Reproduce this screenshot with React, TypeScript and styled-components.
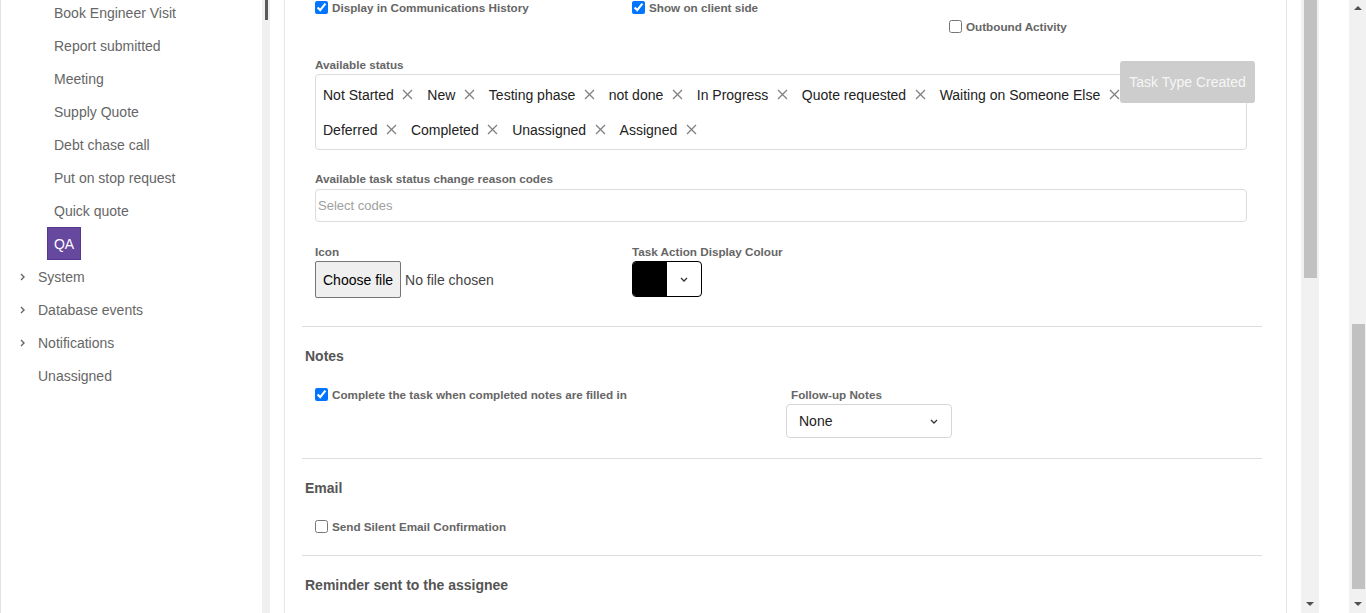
import React from 'react';
import styled, { createGlobalStyle } from 'styled-components';

const GlobalStyle = createGlobalStyle`
  html, body {
    margin: 0;
    padding: 0;
    overflow: hidden;
    background: #fff;
  }
  body {
    font-family: "Liberation Sans", Arial, sans-serif;
  }
  * { box-sizing: border-box; }
`;

const Page = styled.div`
  display: flex;
  width: 1366px;
  height: 613px;
  overflow: hidden;
`;

const Sidebar = styled.nav`
  width: 262px;
  flex-shrink: 0;
  border-left: 1px solid #e3e3e3;
  display: flex;
  flex-direction: column;
  margin-top: -4px;
`;

const NavItem = styled.div<{ $indent: number }>`
  height: 33px;
  display: flex;
  align-items: center;
  padding-left: ${p => p.$indent}px;
  font-size: 14px;
  color: #666;
`;

const Chevron = styled.span`
  width: 18px;
  display: flex;
  align-items: center;
`;

const Badge = styled.div`
  width: 34px;
  height: 33px;
  background: #67489f;
  border: 1px solid #553791;
  color: #fff;
  font-size: 14px;
  display: flex;
  align-items: center;
  justify-content: center;
`;

const SideTrack = styled.div`
  width: 8px;
  flex-shrink: 0;
  background: #f0f0f0;
`;

const SideThumb = styled.div`
  width: 3px;
  height: 20px;
  margin-left: 3px;
  background: #5a5a5a;
`;

const Main = styled.main`
  flex: 1;
  display: flex;
  padding-left: 14px;
`;

const Card = styled.section`
  position: relative;
  width: 1003px;
  flex-shrink: 0;
  border-left: 1px solid #e6e6e6;
  border-right: 1px solid #e6e6e6;
  padding: 0 24px 0 17px;
`;

const Fields = styled.div`
  padding: 0 15px 0 13px;
`;

const TopRow = styled.div`
  display: grid;
  grid-template-columns: 317px 317px 1fr;
  align-items: start;
  margin-top: -1px;
`;

const Check = styled.label<{ $offset?: number }>`
  display: flex;
  align-items: center;
  height: 16px;
  margin-top: ${p => p.$offset || 0}px;
  font-size: 11.7px;
  font-weight: bold;
  color: #666;

  input {
    width: 13px;
    height: 13px;
    margin: 0 4px 0 0;
  }
`;

const FieldLabel = styled.div<{ $top: number; $bottom?: number }>`
  font-size: 11.7px;
  line-height: 14px;
  font-weight: bold;
  color: #666;
  margin-top: ${p => p.$top}px;
  margin-bottom: ${p => p.$bottom ?? 2}px;
`;

const StatusBox = styled.div`
  height: 76px;
  border: 1px solid #dcdcdc;
  border-radius: 4px;
  padding: 0 7px;
  display: flex;
  flex-wrap: wrap;
  align-content: center;
`;

const TagList = styled.div`
  display: flex;
  flex-wrap: wrap;
  max-width: 840px;
`;

const Tag = styled.span`
  height: 35px;
  display: flex;
  align-items: center;
  font-size: 14px;
  color: #222;

  svg {
    margin: 0 14px 0 8.5px;
  }
`;

const CodesInput = styled.div`
  height: 33px;
  border: 1px solid #dcdcdc;
  border-radius: 4px;
  padding-left: 2px;
  display: flex;
  align-items: center;
  font-size: 13px;
  color: #a0a0a0;
`;

const TwoCol = styled.div`
  display: grid;
  grid-template-columns: 317px 1fr;
  align-items: start;
`;

const FileRow = styled.div`
  display: flex;
  align-items: center;
  font-size: 14px;
  color: #444;
`;

const FileButton = styled.button`
  height: 37px;
  padding: 0 7px;
  margin-right: 4px;
  font-family: inherit;
  font-size: 14px;
  color: #000;
  background: #efefef;
  border: 1px solid #767676;
  border-radius: 2px;
`;

const ColourPicker = styled.div`
  width: 70px;
  height: 36px;
  border: 1px solid #000;
  border-radius: 4px;
  overflow: hidden;
  display: flex;
`;

const Swatch = styled.div<{ $colour: string }>`
  width: 34px;
  background: ${p => p.$colour};
`;

const PickerArrow = styled.div`
  flex: 1;
  display: flex;
  align-items: center;
  justify-content: center;
`;

const Separator = styled.hr<{ $top: number }>`
  border: none;
  border-top: 1px solid #dedede;
  margin: ${p => p.$top}px 0 0;
`;

const Heading = styled.h3`
  font-size: 14px;
  line-height: 16px;
  font-weight: bold;
  color: #555;
  margin: 21px 0 0 3px;
`;

const NotesRow = styled.div`
  display: grid;
  grid-template-columns: 471px 1fr;
  align-items: start;
  margin-top: 22px;
`;

const FollowUp = styled.div`
  padding-top: 2px;

  ${FieldLabel} {
    padding-left: 5px;
    margin-bottom: 2px;
  }
`;

const SelectBox = styled.div`
  width: 166px;
  height: 34px;
  border: 1px solid #d6d6d6;
  border-radius: 4px;
  padding: 0 13px 0 12px;
  display: flex;
  align-items: center;
  justify-content: space-between;
  font-size: 14px;
  color: #222;
`;

const Toast = styled.div`
  position: absolute;
  top: 61px;
  right: 31px;
  width: 135px;
  height: 42px;
  background: #cdcdcd;
  border-radius: 3px;
  color: #f6f6f6;
  font-size: 14px;
  display: flex;
  align-items: center;
  justify-content: center;
`;

const Track = styled.div<{ $gap: number }>`
  width: ${p => (p.$gap ? 18 : 17)}px;
  flex-shrink: 0;
  margin-left: ${p => p.$gap}px;
  background: #f1f1f1;
  display: flex;
  flex-direction: column;
  align-items: center;
`;

const Thumb = styled.div<{ $top: number; $height: number }>`
  width: 13px;
  margin-top: ${p => p.$top}px;
  height: ${p => p.$height}px;
  background: #c1c1c1;
`;

const Arrow = styled.div<{ $up?: boolean }>`
  width: 0;
  height: 0;
  border-left: 4px solid transparent;
  border-right: 4px solid transparent;
  ${p => (p.$up ? 'border-bottom: 4px solid #505050;' : 'border-top: 4px solid #505050;')}
  margin: ${p => (p.$up ? '6px 0 0' : 'auto 0 7px')};
`;

const Cross = () => (
  <svg width="11" height="11" viewBox="0 0 11 11">
    <path d="M1 1 L10 10 M10 1 L1 10" stroke="#808080" strokeWidth="1.3" fill="none" />
  </svg>
);

const Down = ({ colour = '#333' }: { colour?: string }) => (
  <svg width="8" height="5" viewBox="0 0 8 5">
    <path d="M1 1 L4 4 L7 1" stroke={colour} strokeWidth="1.3" fill="none" />
  </svg>
);

const RightChevron = () => (
  <svg width="5" height="8" viewBox="0 0 5 8">
    <path d="M1 1 L4 4 L1 7" stroke="#666" strokeWidth="1.4" fill="none" />
  </svg>
);

const subItems = [
  'Book Engineer Visit',
  'Report submitted',
  'Meeting',
  'Supply Quote',
  'Debt chase call',
  'Put on stop request',
  'Quick quote',
];

const statuses = [
  'Not Started',
  'New',
  'Testing phase',
  'not done',
  'In Progress',
  'Quote requested',
  'Waiting on Someone Else',
  'Deferred',
  'Completed',
  'Unassigned',
  'Assigned',
];

const App: React.FC = () => {
  return (
    <Page>
      <GlobalStyle />
      <Sidebar>
        {subItems.map(item => (
          <NavItem key={item} $indent={53}>{item}</NavItem>
        ))}
        <NavItem $indent={46}><Badge>QA</Badge></NavItem>
        {['System', 'Database events', 'Notifications'].map(item => (
          <NavItem key={item} $indent={19}>
            <Chevron><RightChevron /></Chevron>
            {item}
          </NavItem>
        ))}
        <NavItem $indent={37}>Unassigned</NavItem>
      </Sidebar>
      <SideTrack><SideThumb /></SideTrack>

      <Main>
        <Card>
          <Fields>
            <TopRow>
              <Check><input type="checkbox" defaultChecked />Display in Communications History</Check>
              <Check><input type="checkbox" defaultChecked />Show on client side</Check>
              <Check $offset={19}><input type="checkbox" />Outbound Activity</Check>
            </TopRow>

            <FieldLabel $top={24}>Available status</FieldLabel>
            <StatusBox>
              <TagList>
                {statuses.map(s => (
                  <Tag key={s}>{s}<Cross /></Tag>
                ))}
              </TagList>
            </StatusBox>

            <FieldLabel $top={22} $bottom={3}>Available task status change reason codes</FieldLabel>
            <CodesInput>Select codes</CodesInput>

            <TwoCol>
              <div>
                <FieldLabel $top={23}>Icon</FieldLabel>
                <FileRow>
                  <FileButton>Choose file</FileButton>
                  No file chosen
                </FileRow>
              </div>
              <div>
                <FieldLabel $top={23}>Task Action Display Colour</FieldLabel>
                <ColourPicker>
                  <Swatch $colour="#000" />
                  <PickerArrow><Down /></PickerArrow>
                </ColourPicker>
              </div>
            </TwoCol>
          </Fields>

          <Separator $top={28} />
          <Heading>Notes</Heading>
          <Fields>
            <NotesRow>
              <Check><input type="checkbox" defaultChecked />Complete the task when completed notes are filled in</Check>
              <FollowUp>
                <FieldLabel $top={0}>Follow-up Notes</FieldLabel>
                <SelectBox>None<Down /></SelectBox>
              </FollowUp>
            </NotesRow>
          </Fields>

          <Separator $top={20} />
          <Heading>Email</Heading>
          <Fields>
            <Check $offset={22}><input type="checkbox" />Send Silent Email Confirmation</Check>
          </Fields>

          <Separator $top={21} />
          <Heading>Reminder sent to the assignee</Heading>

          <Toast>Task Type Created</Toast>
        </Card>

        <Track $gap={14}>
          <Thumb $top={0} $height={278} />
          <Arrow />
        </Track>
      </Main>

      <Track $gap={30}>
        <Arrow $up />
        <Thumb $top={314} $height={265} />
        <Arrow />
      </Track>
    </Page>
  );
};

export default App;
